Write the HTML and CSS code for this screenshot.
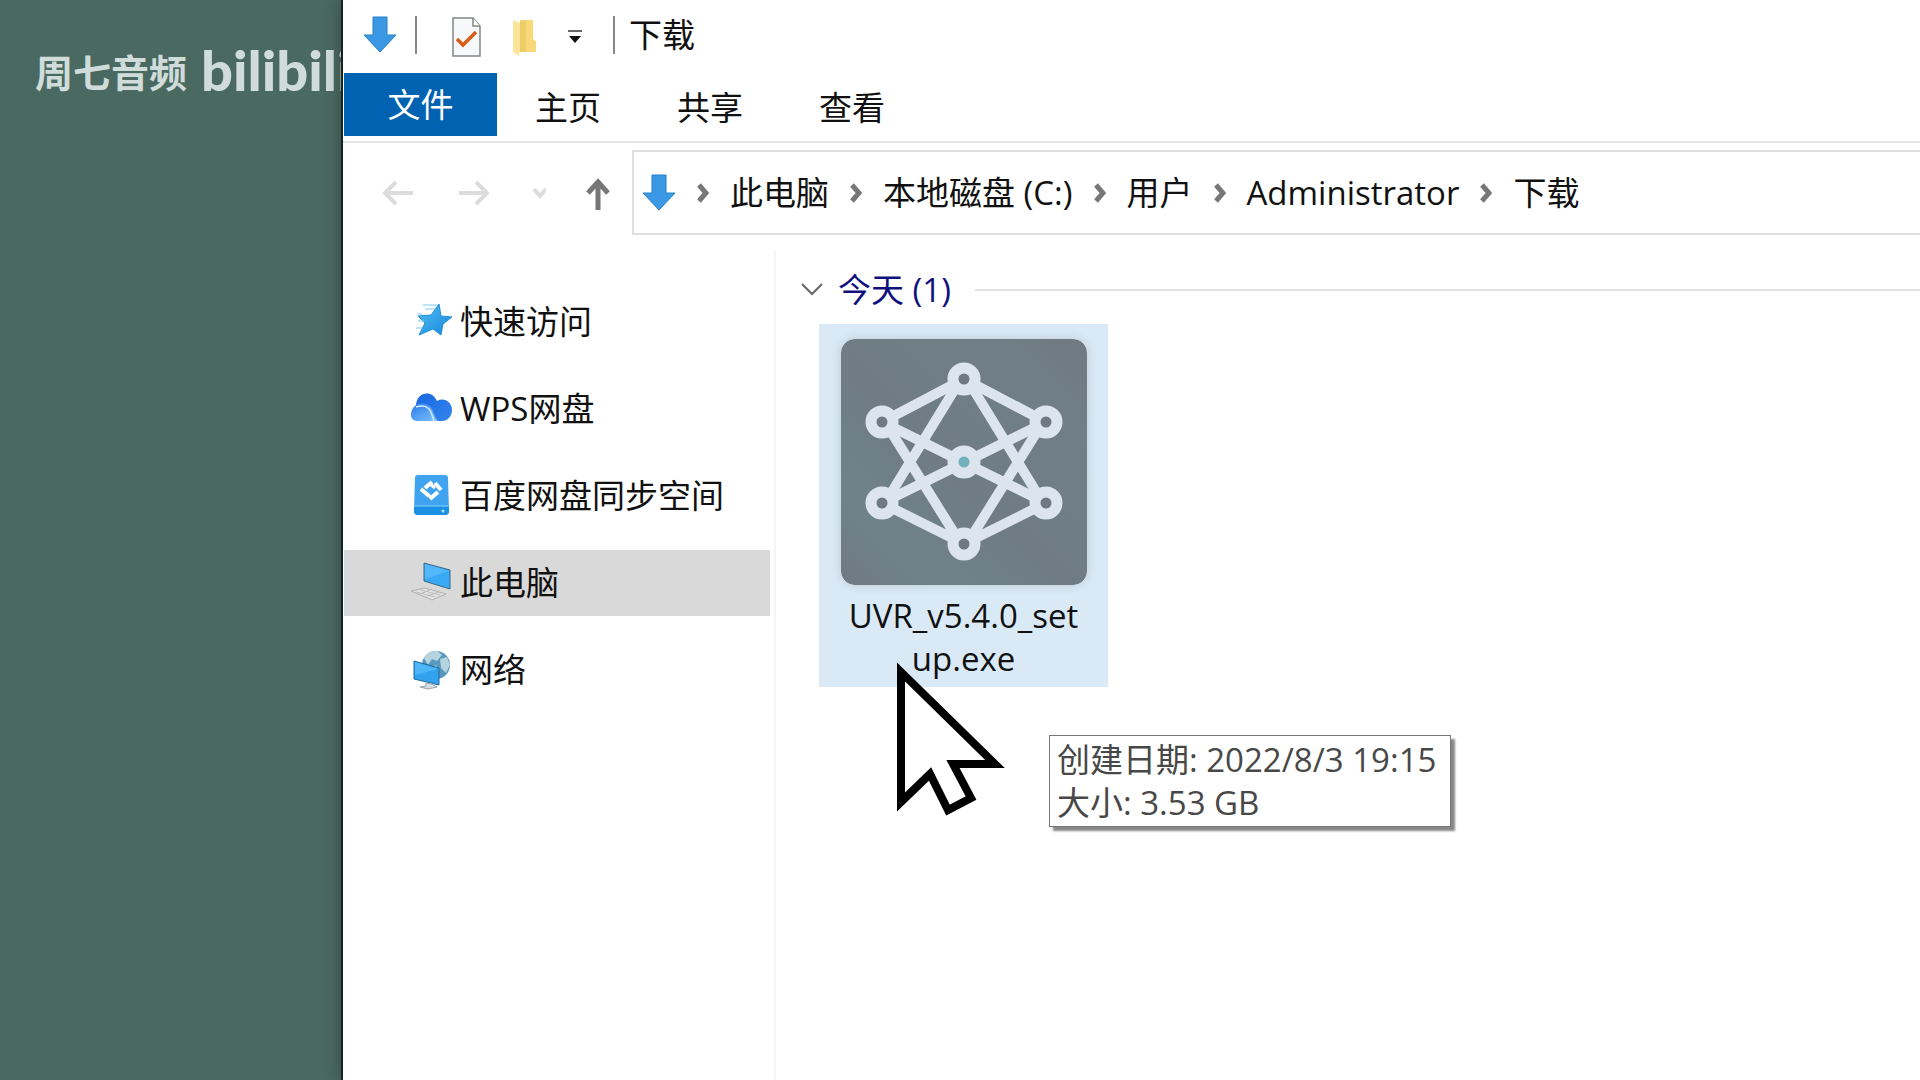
FILE: index.html
```html
<!DOCTYPE html>
<html lang="zh-CN">
<head>
  <meta charset="UTF-8">
  <meta name="viewport" content="width=device-width, initial-scale=1.0">
  <title>下载</title>
  <link rel="stylesheet" href="styles.css">
</head>
<body>
  <!-- Desktop strip with the channel watermark -->
  <aside class="desktop">
    <div class="watermark">
      <span class="channel">周七音频</span>
      <span class="logo">bilibili</span>
    </div>
  </aside>

  <div class="window">
    <!-- Quick access toolbar -->
    <header class="titlebar">
      <svg class="icon-down" width="34" height="38" viewBox="0 0 34 38"><path d="M10 1h14v18h9L17 36 1 19h9z" fill="#3a98e4" stroke="#2780c8"/></svg>
      <span class="divider"></span>
      <div class="tools">
        <button aria-label="属性">
          <svg width="30" height="40" viewBox="0 0 30 40"><path d="M1 1h20l7 8v30H1z" fill="#f7f8fa" stroke="#858585" stroke-width="1.5"/><path d="M21 1v8h7" fill="#fff" stroke="#858585" stroke-width="1.5"/><path d="M5 22l6 6L24 15" fill="none" stroke="#d95b16" stroke-width="3.5"/></svg>
        </button>
        <button aria-label="新建文件夹">
          <svg width="26" height="38" viewBox="0 0 26 38"><path d="M8 2h13v19l3 2v11H8z" fill="#f8d878"/><path d="M8 3h6v31H8z" fill="#f0cc66"/><path d="M1 2l7 3v27l-1 6-6-4z" fill="#fce69b"/></svg>
        </button>
        <button aria-label="自定义快速访问工具栏">
          <svg width="14" height="14" viewBox="0 0 14 14"><path d="M0 1h14" stroke="#333" stroke-width="1.5"/><path d="M1 6h12l-6 7z" fill="#111"/></svg>
        </button>
      </div>
      <span class="divider"></span>
      <h1>下载</h1>
    </header>

    <nav class="tabs">
      <button class="tab active">文件</button>
      <button class="tab">主页</button>
      <button class="tab">共享</button>
      <button class="tab">查看</button>
    </nav>

    <!-- Navigation arrows and path -->
    <div class="navbar">
      <div class="arrows">
        <button aria-label="后退"><svg width="34" height="28" viewBox="0 0 34 28"><path d="M32 14H4M15 3L4 14l11 11" fill="none" stroke="#dcdcdc" stroke-width="4"/></svg></button>
        <button aria-label="前进"><svg width="34" height="28" viewBox="0 0 34 28"><path d="M4 14h28M21 3l11 11-11 11" fill="none" stroke="#dcdcdc" stroke-width="4"/></svg></button>
        <button aria-label="最近位置"><svg width="16" height="28" viewBox="0 0 16 28"><path d="M4 10l6 7 6-7" fill="none" stroke="#dcdcdc" stroke-width="4"/></svg></button>
        <button aria-label="上移"><svg width="24" height="34" viewBox="0 0 24 34"><path d="M12 34V6M2 17L12 6l10 11" fill="none" stroke="#767676" stroke-width="5"/></svg></button>
      </div>
      <div class="address">
        <svg class="icon-down" width="34" height="38" viewBox="0 0 34 38"><path d="M10 1h14v18h9L17 36 1 19h9z" fill="#3a98e4" stroke="#2780c8"/></svg>
        <svg class="sep" viewBox="0 0 12 20"><path d="M2 2l7 8-7 8"/></svg>
        <a href="#">此电脑</a>
        <svg class="sep" viewBox="0 0 12 20"><path d="M2 2l7 8-7 8"/></svg>
        <a href="#">本地磁盘 (C:)</a>
        <svg class="sep" viewBox="0 0 12 20"><path d="M2 2l7 8-7 8"/></svg>
        <a href="#">用户</a>
        <svg class="sep" viewBox="0 0 12 20"><path d="M2 2l7 8-7 8"/></svg>
        <a href="#">Administrator</a>
        <svg class="sep" viewBox="0 0 12 20"><path d="M2 2l7 8-7 8"/></svg>
        <a href="#">下载</a>
      </div>
    </div>

    <div class="content">
      <nav class="sidebar">
        <a href="#">
          <svg width="42" height="42" viewBox="0 0 42 42"><defs><linearGradient id="star" x2="1" y2="1"><stop offset="0" stop-color="#55bdf5"/><stop offset="1" stop-color="#1488d8"/></linearGradient></defs><path d="M29 4l2 12 11 1-9 7-2 11-8-6-14 6 6-12-7-7 13-1z" fill="url(#star)" stroke="#2090d8"/><path d="M13 5h14M15 9h10M7 14h5M8 21h6M6 28h6" stroke="#7dc8ef"/></svg>
          快速访问
        </a>
        <a href="#">
          <svg width="42" height="42" viewBox="0 0 42 42"><defs><linearGradient id="cloud" x2="1" y2="1"><stop offset="0" stop-color="#1767e0"/><stop offset="1" stop-color="#3485ee"/></linearGradient><linearGradient id="cloud2" x2="1" y2="1"><stop offset="0" stop-color="#2778e8"/><stop offset="1" stop-color="#82c4ff"/></linearGradient></defs><path d="M6 19C6 5 22 2 27 14c7-4 15 1 15 9 0 6-4 11-10 11H12z" fill="url(#cloud)"/><path d="M1 28c0-8 8-15 17-10 6 3 5 10 10 16H8c-4 0-7-2-7-6z" fill="url(#cloud2)"/><path d="M6 20c13-4 15 4 18 14" fill="none" stroke="#d5eaff" stroke-width="1.5"/></svg>
          WPS网盘
        </a>
        <a href="#">
          <svg width="42" height="42" viewBox="0 0 42 42">
            <path d="M8 1h27q3 0 3 3l1 33q0 4-4 4H8q-4 0-4-4L5 4q0-3 3-3z" fill="#3fa3f0"/>
            <path d="M4 32h35v5q0 4-4 4H8q-4 0-4-4z" fill="#1c90e2"/>
            <path d="M4 32h35" stroke="#82d3ff"/>
            <circle cx="33" cy="37" r="1.5" fill="#a8e5ff"/>
            <g fill="none" stroke="#fff" stroke-width="4">
              <path d="M15 14l7-6"/>
              <path d="M25 9l6 7"/>
              <path d="M28 18l-8 7"/>
              <path d="M19 22l-8-7"/>
              <path d="M20 10l5 4M22 24l-5-4" stroke-width="3"/>
            </g>
          </svg>
          百度网盘同步空间
        </a>
        <a href="#" class="selected">
          <svg width="42" height="42" viewBox="0 0 42 42"><path d="M14 2l26 7v19l-26-8z" fill="#39a9f5" stroke="#3c6685"/><path d="M15 3l24 7-24 8z" fill="#52b8fa"/><path d="M1 30l14-3 21 6-14 6z" fill="#e2e2e2" stroke="#b0b0b0"/><path d="M6 31l19 5M11 29l19 5M10 33l12-5M17 35l12-4" stroke="#bbb"/></svg>
          此电脑
        </a>
        <a href="#">
          <svg width="42" height="42" viewBox="0 0 42 42"><circle cx="26" cy="17" r="14" fill="#5799bc"/><path d="M14 10q4-8 13-7l5 4-5 6-5-2-4 6zM30 11l7-2 3 8-4 8-5-5zM20 20l6-3 3 7-5 5z" fill="#b5d4df"/><path d="M4 13l25 7v17L4 31z" fill="#32a2ef" stroke="#236a9c"/><path d="M5 14l23 7-23 6z" fill="#4eb6f8"/><path d="M16 35v3l-6 1 8 2 9-2-5-3z" fill="#d7dde0" stroke="#9ba4a8"/></svg>
          网络
        </a>
      </nav>

      <main class="files">
        <div class="group">
          <svg width="22" height="14" viewBox="0 0 22 14"><path d="M1 1l10 10L21 1" fill="none" stroke="#666" stroke-width="2"/></svg>
          <h2>今天 (1)</h2>
          <span class="line"></span>
        </div>

        <div class="file">
          <svg class="thumb" viewBox="0 0 246 246">
            <defs>
              <linearGradient id="bg" x1="0" y1="1" x2="1" y2="0">
                <stop offset="0" stop-color="#6f7982"/>
                <stop offset=".2" stop-color="#70828a"/>
                <stop offset=".45" stop-color="#6f7c84"/>
                <stop offset=".8" stop-color="#707f87"/>
                <stop offset="1" stop-color="#6f7982"/>
              </linearGradient>
            </defs>
            <rect width="246" height="246" rx="14" fill="url(#bg)"/>
            <g fill="none" stroke="#dce4ee" stroke-width="10">
              <path d="M123 40l82 43L41 164l82 41 82-41L41 83z"/>
              <path d="M120 40L44 164M126 40l76 124M120 205L44 83M126 205l76-122"/>
            </g>
            <g fill="#6f7982" stroke="#dce4ee" stroke-width="11">
              <circle cx="123" cy="40" r="11"/>
              <circle cx="205" cy="83" r="11"/>
              <circle cx="205" cy="164" r="11"/>
              <circle cx="123" cy="205" r="11"/>
              <circle cx="41" cy="164" r="11"/>
              <circle cx="41" cy="83" r="11"/>
              <circle cx="123" cy="123" r="11" fill="#72b0bb"/>
            </g>
          </svg>
          <span class="name">UVR_v5.4.0_set<br>up.exe</span>

          <svg class="cursor" width="108" height="156" viewBox="0 0 108 156"><path d="M4 10v130l29-28 18 36 23-12-18-34h42z" fill="#fff" stroke="#000" stroke-width="8"/></svg>
          <div class="tooltip" role="tooltip">创建日期: 2022/8/3 19:15<br>大小: 3.53 GB</div>
        </div>
      </main>
    </div>
  </div>
</body>
</html>
```

FILE: styles.css
```css
* {
  box-sizing: border-box;
}

body {
  margin: 0;
  min-height: 100vh;
  display: flex;
  background-color: #4a6960;
  color: #111;
  font-family: "Open Sans", "Noto Sans CJK SC", sans-serif;
  font-size: 33px;
  line-height: 43px;
}

button {
  border: none;
  padding: 0;
  background: none;
  color: inherit;
  font: inherit;
  cursor: pointer;
}

a {
  color: inherit;
  text-decoration: none;
}

svg {
  display: block;
  flex-shrink: 0;
}

h1,
h2 {
  margin: 0;
  font-size: 33px;
  font-weight: normal;
}

/* Desktop */
.desktop {
  width: 341px;
  flex-shrink: 0;
}

.watermark {
  display: flex;
  align-items: center;
  gap: 14px;
  padding: 34px 0 0 35px;
  color: #cfdcda;
  white-space: nowrap;
}

.channel {
  font-family: "Noto Sans CJK SC", sans-serif;
  font-size: 38px;
  font-weight: bold;
}

.logo {
  font-family: Lato, sans-serif;
  font-size: 56px;
  font-weight: 900;
  line-height: 72px;
}

/* Explorer window */
.window {
  flex: 1;
  min-width: 0;
  display: flex;
  flex-direction: column;
  border-left: 2px solid #14231f;
  background-color: #fff;
  box-shadow: 0 0 16px rgba(0, 0, 0, 0.3);
}

.titlebar {
  display: flex;
  align-items: center;
  height: 73px;
  padding: 0 20px 4px;
}

.titlebar .divider {
  width: 2px;
  height: 38px;
  margin: 0 14px 0 16px;
  background-color: #888;
}

.titlebar .icon-down {
  margin-right: 2px;
}

.tools {
  display: flex;
  align-items: center;
  gap: 30px;
  padding: 4px 15px 0 21px;
}

.tabs {
  display: flex;
  padding-left: 1px;
  border-bottom: 2px solid #e5e6e7;
}

.tab {
  height: 63px;
  margin-bottom: 5px;
  padding: 6px 38px 0;
}

.tab.active {
  width: 153px;
  padding: 0;
  background-color: #0063b1;
  color: #fff;
}

.navbar {
  display: flex;
  align-items: center;
  padding-top: 7px;
}

.arrows {
  display: flex;
  align-items: center;
  justify-content: space-between;
  width: 289px;
  padding: 0 22px 0 38px;
}

.address {
  flex: 1;
  display: flex;
  align-items: center;
  height: 85px;
  padding-left: 8px;
  border: 2px solid #dedede;
  border-right: none;
  white-space: nowrap;
}

.sep {
  width: 12px;
  height: 20px;
  margin: 0 21px;
  fill: none;
  stroke: #777;
  stroke-width: 5;
}

.content {
  flex: 1;
  display: flex;
  margin-top: 16px;
}

/* Sidebar */
.sidebar {
  width: 433px;
  padding: 38px 4px 0 1px;
  border-right: 2px solid #f5f5f5;
}

.sidebar a {
  display: flex;
  align-items: center;
  gap: 8px;
  height: 66px;
  margin-bottom: 21px;
  padding: 0 0 2px 66px;
}

.sidebar .selected {
  background-color: #d9d9d9;
}

/* File list */
.files {
  flex: 1;
  padding: 17px 0 0 25px;
}

.group {
  display: flex;
  align-items: center;
  color: #10107c;
}

.group h2 {
  margin: 0 24px 0 15px;
}

.group .line {
  flex: 1;
  height: 2px;
  background-color: #e3e3e3;
}

.file {
  position: relative;
  width: 289px;
  margin: 13px 0 0 18px;
  padding: 15px 0 7px;
  background-color: #d9e9f6;
  text-align: center;
}

.thumb {
  width: 246px;
  margin: 0 auto 9px;
  border-radius: 14px;
  box-shadow: 0 0 10px #c0cad2;
}

.name {
  display: block;
}

.cursor {
  position: absolute;
  top: 338px;
  left: 78px;
}

.tooltip {
  position: absolute;
  top: 411px;
  left: 230px;
  padding: 2px 14px 2px 7px;
  border: 1px solid #777;
  background-color: #fff;
  box-shadow: 4px 4px 2px #888;
  color: #484848;
  text-align: left;
  white-space: nowrap;
}
```
